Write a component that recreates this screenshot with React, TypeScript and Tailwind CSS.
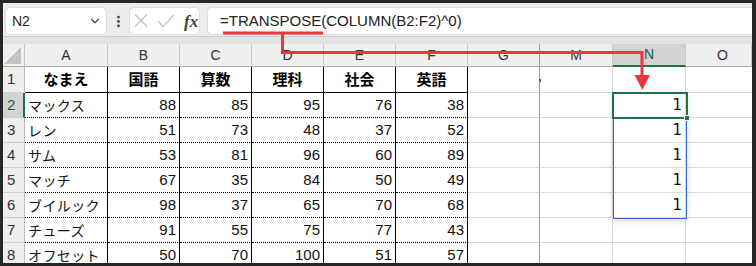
import { ChevronDown, EllipsisVertical } from "lucide-react";

const GRID = "grid grid-cols-[22px_83px_72px_72px_72px_72px_72px_72px_73px_73px_66px]";
const SANS = "font-['Liberation_Sans',Arial,sans-serif]";
const JP = "font-['Noto_Sans_CJK_JP',sans-serif]";

const letters = ["A", "B", "C", "D", "E", "F", "G", "M", "N", "O"];

const table: (string | number)[][] = [
  ["なまえ", "国語", "算数", "理科", "社会", "英語"],
  ["マックス", 88, 85, 95, 76, 38],
  ["レン", 51, 73, 48, 37, 52],
  ["サム", 53, 81, 96, 60, 89],
  ["マッチ", 67, 35, 84, 50, 49],
  ["ブイルック", 98, 37, 65, 70, 68],
  ["チューズ", 91, 55, 75, 77, 43],
  ["オフセット", 50, 70, 100, 51, 57],
];

function FormulaBar() {
  return (
    <div className="flex h-[33px] shrink-0 items-start bg-[#ececec] pl-[2px] pt-[4px]">
      <div className="flex h-[28px] w-[102px] items-center justify-between rounded-[5px] border border-[#dedede] bg-white pl-[6px] pr-[4px]">
        <span className={`${SANS} text-[14px] text-[#222]`}>N2</span>
        <ChevronDown size={14} strokeWidth={2} className="text-[#444]" />
      </div>
      <div className="flex h-[28px] w-[22px] items-center justify-center">
        <EllipsisVertical size={15} strokeWidth={2.5} className="text-[#444]" />
      </div>
      <div className="flex h-[28px] w-[71px] items-center rounded-[5px] border border-[#dedede] bg-white pl-[4px]">
        <svg width="44" height="16" viewBox="0 0 44 16" className="mr-[6px]">
          <path d="M1 1.5 L13 13.5 M13 1.5 L1 13.5" stroke="#c4c4c4" strokeWidth="1.3" fill="none" />
          <path d="M24 8 L29 13.5 L40 2" stroke="#c4c4c4" strokeWidth="1.3" fill="none" />
        </svg>
        <span className="font-['Liberation_Serif',serif] text-[17px] font-bold italic leading-none text-[#444]">fx</span>
      </div>
      <div className="ml-[7px] flex h-[28px] flex-1 items-center rounded-l-[5px] border border-r-0 border-[#dedede] bg-white pl-[12px]">
        <span className={`${SANS} text-[15px] text-[#222]`}>=TRANSPOSE(COLUMN(B2:F2)^0)</span>
      </div>
    </div>
  );
}

function HeaderRow() {
  return (
    <div className={`${GRID} h-[23px] shrink-0`}>
      <div className="relative border-b border-r border-b-[#a9a9a9] border-r-[#c4c4c4] bg-[#efefef]">
        <svg width="17" height="17" viewBox="0 0 17 17" className="absolute bottom-[2px] right-[3px]">
          <polygon points="17,0 17,17 0,17" fill="#c2c2c2" />
        </svg>
      </div>
      {letters.map((l) => {
        const sel = l === "N";
        return (
          <div
            key={l}
            className={`${SANS} flex items-center justify-center border-r text-[14px] ${
              l === "G" ? "border-r-[#9b9b9b]" : "border-r-[#c8c8c8]"
            } ${l === "O" ? "pl-[8px]" : ""} ${
              sel
                ? "border-b-2 border-b-[#217346] bg-[#d3d3d3] text-[#1d5c37]"
                : "border-b border-b-[#a9a9a9] bg-[#efefef] text-[#333]"
            }`}
          >
            {l}
          </div>
        );
      })}
    </div>
  );
}

function Row({ n }: { n: number }) {
  const data = table[n - 1];
  const head = n === 1;
  const sel = n === 2;
  return (
    <div className={`${GRID} shrink-0 ${head ? "h-[26px]" : "h-[25px]"}`}>
      <div
        className={`${SANS} flex items-center border-b border-b-[#d0d0d0] pl-[4px] text-[15px] ${
          sel
            ? "border-r-2 border-r-[#217346] bg-[#d3d3d3] text-[#1d5c37]"
            : "border-r border-r-[#bdbdbd] bg-[#efefef] text-[#333]"
        }`}
      >
        {n}
      </div>
      {data.map((v, i) => (
        <div
          key={i}
          className={`flex items-center border-b border-r border-b-black border-r-black ${
            head ? "" : "[border-bottom-style:dotted]"
          } ${
            head
              ? `${JP} justify-center text-[15px] font-bold text-black`
              : i === 0
                ? `${JP} pl-[3px] text-[14px] tracking-[0.4px] text-[#111]`
                : `${SANS} justify-end pr-[3px] text-[15px] text-[#111]`
          }`}
        >
          {v}
        </div>
      ))}
      <div className="relative border-b border-r border-b-[#d9d9d9] border-r-[#9b9b9b]">
        {head && <span className="absolute right-[-2px] top-[12px] h-[3px] w-[2px] bg-[#2f6bd1]" />}
      </div>
      <div className="border-b border-r border-b-[#d9d9d9] border-r-[#d9d9d9]" />
      <div
        className={`flex items-center justify-end border-b border-r border-b-[#d9d9d9] border-r-[#d9d9d9] pr-[3px] font-['DejaVu_Sans',sans-serif] text-[15px] text-[#111]`}
      >
        {n >= 2 && n <= 6 ? "1" : ""}
      </div>
      <div className="border-b border-b-[#d9d9d9]" />
    </div>
  );
}

export default function App() {
  return (
    <div className="relative h-[266px] w-[756px] overflow-hidden bg-[#262626] pl-[3px] pt-[3px]">
      <div className="flex h-[260px] w-[749px] flex-col overflow-hidden bg-white">
        <FormulaBar />
        <div className="h-[8px] shrink-0 border-t border-[#cccccc] bg-[#e3e3e3]" />
        <HeaderRow />
        {[1, 2, 3, 4, 5, 6, 7, 8].map((n) => (
          <Row key={n} n={n} />
        ))}
      </div>

      {/* spill range + active cell */}
      <div className="pointer-events-none absolute left-[613px] top-[93px] h-[126px] w-[74px] border border-[#2f6bd1] shadow-[0_2px_6px_rgba(0,0,0,0.15)]" />
      <div className="pointer-events-none absolute left-[612px] top-[92px] h-[27px] w-[76px] border-2 border-[#217346]" />
      <div className="pointer-events-none absolute left-[684px] top-[115px] h-[6px] w-[6px] border border-white bg-[#217346]" />

      {/* red annotation arrow */}
      <svg className="pointer-events-none absolute left-0 top-0" width="756" height="266" viewBox="0 0 756 266">
        <g stroke="#e8383f" strokeWidth="3" fill="none">
          <path d="M223 33 H323" />
          <path d="M282.5 33 V52.5 H642 V77" />
        </g>
        <polygon points="634.5,75 650,75 642.3,90" fill="#e8383f" />
      </svg>
    </div>
  );
}
